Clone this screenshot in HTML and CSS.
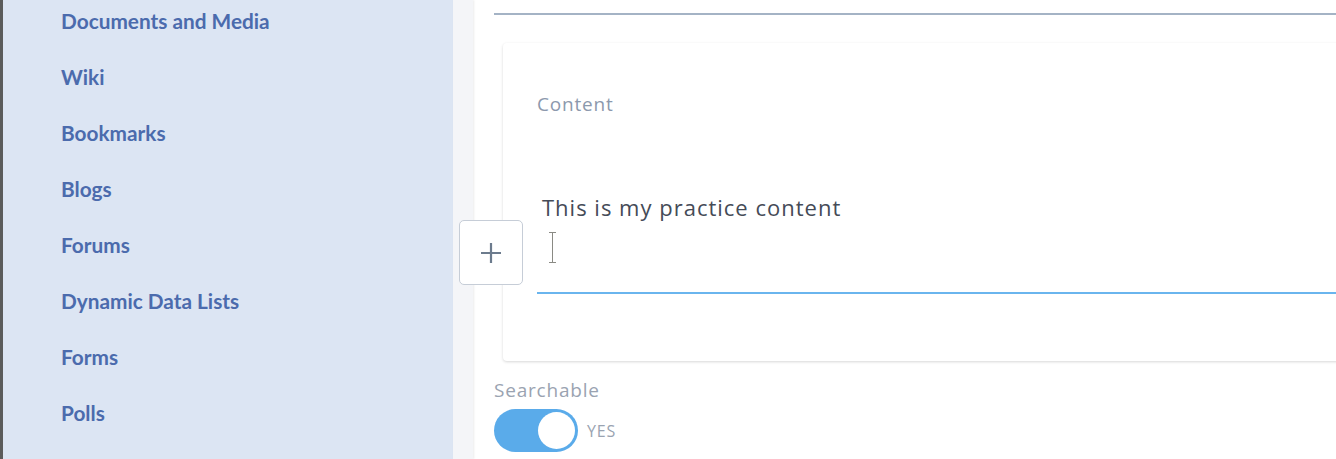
FILE: index.html
```html
<!DOCTYPE html>
<html lang="en">
<head>
    <meta charset="UTF-8">
    <meta name="viewport" content="width=device-width, initial-scale=1.0">
    <title>Web Content</title>
    <link rel="stylesheet" href="styles.css">
</head>
<body>
    <div class="page">
        <nav class="sidebar">
            <ul class="nav-list">
                <li><a href="#">Documents and Media</a></li>
                <li><a href="#">Wiki</a></li>
                <li><a href="#">Bookmarks</a></li>
                <li><a href="#">Blogs</a></li>
                <li><a href="#">Forums</a></li>
                <li><a href="#">Dynamic Data Lists</a></li>
                <li><a href="#">Forms</a></li>
                <li><a href="#">Polls</a></li>
            </ul>
        </nav>
        <div class="gutter"></div>
        <main class="main">
            <hr class="divider">
            <div class="card">
                <button class="add-btn" type="button" aria-label="Add">
                    <svg width="22" height="22" viewBox="0 0 22 22">
                        <path d="M11 1v20M1 11h20" stroke="#6c7b8d" stroke-width="2.2" fill="none"/>
                    </svg>
                </button>
                <label class="field-label">Content</label>
                <div class="editor">
                    <p>This is my practice content</p>
                    <svg class="caret" width="9" height="31" viewBox="0 0 9 31">
                        <path d="M1 0.5h7M1 30.5h7M4.5 0.5v30" stroke="#8a8a84" stroke-width="1" fill="none"/>
                    </svg>
                </div>
            </div>
            <div class="searchable">
                <span class="field-label">Searchable</span>
                <label class="switch">
                    <span class="track"><span class="knob"></span></span>
                    <span class="switch-text">YES</span>
                </label>
            </div>
        </main>
    </div>
</body>
</html>
```

FILE: styles.css
```css
body {
    margin: 0;
    font-family: "Open Sans", Arial, sans-serif;
    background-color: #fff;
    overflow: hidden;
}

.page {
    display: flex;
    height: 459px;
}

.sidebar {
    width: 453px;
    flex-shrink: 0;
    background-color: #dce5f3;
    border-left: 3px solid #5b5b5b;
    box-sizing: border-box;
}

.nav-list {
    list-style: none;
    margin: -7px 0 0;
    padding: 0 0 0 58px;
}

.nav-list li {
    height: 56px;
    line-height: 56px;
}

.nav-list a {
    font-family: "Lato", sans-serif;
    font-weight: 700;
    font-size: 20.8px;
    color: #4b6bad;
    text-decoration: none;
}

.gutter {
    width: 20px;
    flex-shrink: 0;
    background-color: #f4f5f8;
    box-shadow: 1px 0 2px rgba(0, 0, 0, 0.08);
}

.main {
    flex: 1;
    padding-left: 21px;
    min-width: 0;
}

.divider {
    margin: 13px -20px 0 0;
    border: none;
    height: 2px;
    background-color: #a4b3c5;
}

.card {
    position: relative;
    margin: 28px -20px 0 9px;
    height: 318px;
    padding: 49px 0 0 34px;
    box-sizing: border-box;
    background-color: #fff;
    border-radius: 4px;
    box-shadow: 0 1px 3px rgba(0, 0, 0, 0.16);
}

.field-label {
    display: block;
    font-size: 19px;
    letter-spacing: 0.8px;
    color: #8c99ad;
    line-height: 24px;
}

.editor {
    margin-top: 76px;
    height: 102px;
    border-bottom: 2px solid #6ab5ee;
    box-sizing: border-box;
}

.editor p {
    margin: 0 0 0 5px;
    font-size: 22px;
    letter-spacing: 1px;
    line-height: 30px;
    color: #454b57;
}

.caret {
    display: block;
    margin: 10px 0 0 11px;
}

.add-btn {
    position: absolute;
    left: -44px;
    top: 177px;
    width: 64px;
    height: 65px;
    display: flex;
    align-items: center;
    justify-content: center;
    border: 1px solid #c6cdd7;
    border-radius: 5px;
    background-color: #fff;
    padding: 0;
    cursor: pointer;
}

.searchable {
    margin-top: 17px;
}

.searchable .field-label {
    color: #9aa3b1;
}

.switch {
    display: flex;
    align-items: center;
    gap: 9px;
    margin-top: 7px;
}

.track {
    display: flex;
    justify-content: flex-end;
    align-items: center;
    width: 84px;
    height: 43px;
    padding: 3px;
    box-sizing: border-box;
    background-color: #5aabea;
    border-radius: 22px;
}

.knob {
    width: 37px;
    height: 37px;
    border-radius: 50%;
    background-color: #fff;
}

.switch-text {
    font-size: 16px;
    letter-spacing: 0.8px;
    color: #9aa3b1;
}
```
